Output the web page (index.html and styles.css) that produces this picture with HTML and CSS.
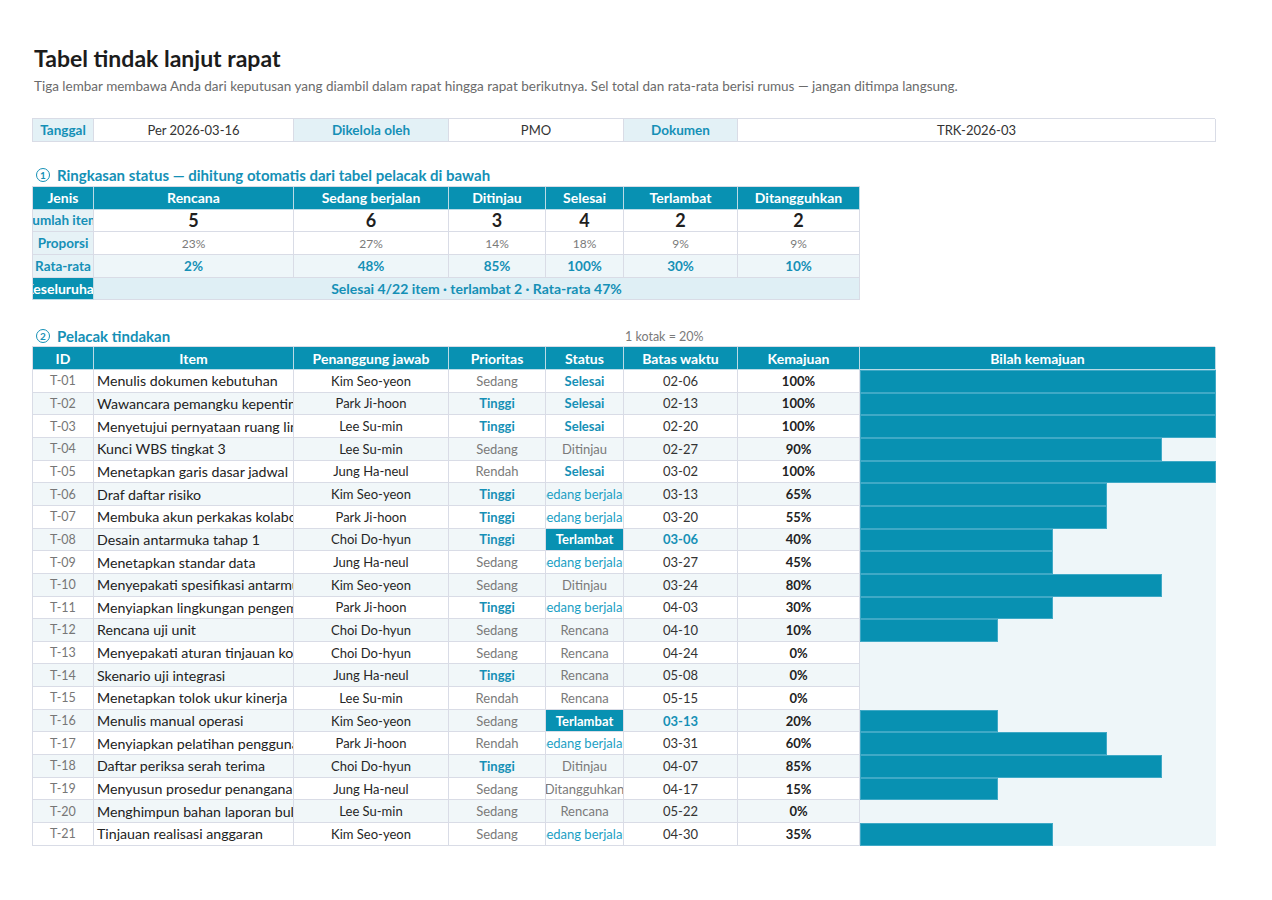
FILE: index.html
```html
<!DOCTYPE html>
<html lang="id">
<head>
  <meta charset="UTF-8">
  <meta name="viewport" content="width=device-width, initial-scale=1.0">
  <title>Tabel tindak lanjut rapat</title>
  <link rel="stylesheet" href="styles.css">
</head>
<body>

  <!-- Judul -->
  <h1 class="title">Tabel tindak lanjut rapat</h1>
  <p class="subtitle">Tiga lembar membawa Anda dari keputusan yang diambil dalam rapat hingga rapat berikutnya. Sel total dan rata-rata berisi rumus — jangan ditimpa langsung.</p>

  <!-- Info dokumen -->
  <div class="sheet info">
    <div class="c label">Tanggal</div>
    <div class="c value">Per 2026-03-16</div>
    <div class="c label">Dikelola oleh</div>
    <div class="c value span2">PMO</div>
    <div class="c label">Dokumen</div>
    <div class="c value span2">TRK-2026-03</div>
  </div>

  <!-- Ringkasan -->
  <div class="section-title"><span class="num">1</span>Ringkasan status — dihitung otomatis dari tabel pelacak di bawah</div>
  <div class="sheet summary">
    <div class="c head">Jenis</div>
    <div class="c head">Rencana</div>
    <div class="c head">Sedang berjalan</div>
    <div class="c head">Ditinjau</div>
    <div class="c head">Selesai</div>
    <div class="c head">Terlambat</div>
    <div class="c head">Ditangguhkan</div>

    <div class="c rowlabel">Jumlah item</div>
    <div class="c count">5</div>
    <div class="c count">6</div>
    <div class="c count">3</div>
    <div class="c count">4</div>
    <div class="c count">2</div>
    <div class="c count">2</div>

    <div class="c rowlabel">Proporsi</div>
    <div class="c ratio">23%</div>
    <div class="c ratio">27%</div>
    <div class="c ratio">14%</div>
    <div class="c ratio">18%</div>
    <div class="c ratio">9%</div>
    <div class="c ratio">9%</div>

    <div class="c rowlabel">Rata-rata</div>
    <div class="c avg">2%</div>
    <div class="c avg">48%</div>
    <div class="c avg">85%</div>
    <div class="c avg">100%</div>
    <div class="c avg">30%</div>
    <div class="c avg">10%</div>

    <div class="c head">Keseluruhan</div>
    <div class="c total">Selesai 4/22 item · terlambat 2 · Rata-rata 47%</div>
  </div>

  <!-- Pelacak -->
  <div class="tracker-title">
    <div class="section-title"><span class="num">2</span>Pelacak tindakan</div>
    <div class="note">1 kotak = 20%</div>
  </div>
  <div class="sheet tracker" id="tracker">
    <div class="c head">ID</div>
    <div class="c head">Item</div>
    <div class="c head">Penanggung jawab</div>
    <div class="c head">Prioritas</div>
    <div class="c head">Status</div>
    <div class="c head">Batas waktu</div>
    <div class="c head">Kemajuan</div>
    <div class="c head">Bilah kemajuan</div>
  </div>

  <script>
    // Data pelacak: id, item, pj, prioritas, status, batas, kemajuan, kotak
    const rows = [
      ['T-01', 'Menulis dokumen kebutuhan', 'Kim Seo-yeon', 'Sedang', 'Selesai', '02-06', 100, 5],
      ['T-02', 'Wawancara pemangku kepentingan', 'Park Ji-hoon', 'Tinggi', 'Selesai', '02-13', 100, 5],
      ['T-03', 'Menyetujui pernyataan ruang lingkup', 'Lee Su-min', 'Tinggi', 'Selesai', '02-20', 100, 5],
      ['T-04', 'Kunci WBS tingkat 3', 'Lee Su-min', 'Sedang', 'Ditinjau', '02-27', 90, 4],
      ['T-05', 'Menetapkan garis dasar jadwal', 'Jung Ha-neul', 'Rendah', 'Selesai', '03-02', 100, 5],
      ['T-06', 'Draf daftar risiko', 'Kim Seo-yeon', 'Tinggi', 'Sedang berjalan', '03-13', 65, 3],
      ['T-07', 'Membuka akun perkakas kolaborasi', 'Park Ji-hoon', 'Tinggi', 'Sedang berjalan', '03-20', 55, 3],
      ['T-08', 'Desain antarmuka tahap 1', 'Choi Do-hyun', 'Tinggi', 'Terlambat', '03-06', 40, 2],
      ['T-09', 'Menetapkan standar data', 'Jung Ha-neul', 'Sedang', 'Sedang berjalan', '03-27', 45, 2],
      ['T-10', 'Menyepakati spesifikasi antarmuka', 'Kim Seo-yeon', 'Sedang', 'Ditinjau', '03-24', 80, 4],
      ['T-11', 'Menyiapkan lingkungan pengembangan', 'Park Ji-hoon', 'Tinggi', 'Sedang berjalan', '04-03', 30, 2],
      ['T-12', 'Rencana uji unit', 'Choi Do-hyun', 'Sedang', 'Rencana', '04-10', 10, 1],
      ['T-13', 'Menyepakati aturan tinjauan kode', 'Choi Do-hyun', 'Sedang', 'Rencana', '04-24', 0, 0],
      ['T-14', 'Skenario uji integrasi', 'Jung Ha-neul', 'Tinggi', 'Rencana', '05-08', 0, 0],
      ['T-15', 'Menetapkan tolok ukur kinerja', 'Lee Su-min', 'Rendah', 'Rencana', '05-15', 0, 0],
      ['T-16', 'Menulis manual operasi', 'Kim Seo-yeon', 'Sedang', 'Terlambat', '03-13', 20, 1],
      ['T-17', 'Menyiapkan pelatihan pengguna', 'Park Ji-hoon', 'Rendah', 'Sedang berjalan', '03-31', 60, 3],
      ['T-18', 'Daftar periksa serah terima', 'Choi Do-hyun', 'Tinggi', 'Ditinjau', '04-07', 85, 4],
      ['T-19', 'Menyusun prosedur penanganan insiden', 'Jung Ha-neul', 'Sedang', 'Ditangguhkan', '04-17', 15, 1],
      ['T-20', 'Menghimpun bahan laporan bulanan', 'Lee Su-min', 'Sedang', 'Rencana', '05-22', 0, 0],
      ['T-21', 'Tinjauan realisasi anggaran', 'Kim Seo-yeon', 'Sedang', 'Sedang berjalan', '04-30', 35, 2]
    ];

    // Lebar kotak pada kolom bilah (px)
    const boxEnd = [0, 138, 193, 247, 302, 356];

    const statusClass = {
      'Selesai': 'st-done',
      'Sedang berjalan': 'st-run',
      'Terlambat': 'st-late',
      'Ditinjau': 'st-muted',
      'Rencana': 'st-muted',
      'Ditangguhkan': 'st-muted'
    };

    const tracker = document.getElementById('tracker');
    let html = '';
    rows.forEach((r, i) => {
      const alt = i % 2 === 1 ? ' alt' : '';
      const late = r[4] === 'Terlambat';
      html += `
        <div class="c id${alt}">${r[0]}</div>
        <div class="c item${alt}">${r[1]}</div>
        <div class="c owner${alt}">${r[2]}</div>
        <div class="c ${r[3] === 'Tinggi' ? 'pr-high' : 'pr-normal'}${alt}">${r[3]}</div>
        <div class="c ${statusClass[r[4]]}${alt}">${r[4]}</div>
        <div class="c due${late ? ' due-late' : ''}${alt}">${r[5]}</div>
        <div class="c pct${alt}">${r[6]}%</div>
        <div class="c bar-cell"><div class="bar" style="width: ${boxEnd[r[7]]}px"></div></div>
      `;
    });
    tracker.insertAdjacentHTML('beforeend', html);
  </script>

</body>
</html>
```

FILE: styles.css
```css
body {
  margin: 0;
  padding: 44px 32px 40px 32px;
  background-color: #ffffff;
  font-family: 'Lato', 'Carlito', 'Liberation Sans', sans-serif;
  color: #222;
}

.title {
  margin: 0 0 0 2px;
  font-size: 23px;
  line-height: 28px;
  font-weight: 700;
  color: #1c1c1c;
}

.subtitle {
  margin: 5px 0 0 2px;
  font-size: 13.5px;
  line-height: 18px;
  color: #6b6b6b;
}

/* Grid lembar kerja */
.sheet {
  display: grid;
  grid-template-columns: 61px 200px 155px 97px 78px 114px 122px 356px;
  border-left: 1px solid #d9dce6;
  border-top: 1px solid #d9dce6;
  width: 1183px;
  box-sizing: border-box;
}

.c {
  box-sizing: border-box;
  display: flex;
  align-items: center;
  justify-content: center;
  overflow: hidden;
  white-space: nowrap;
  border-right: 1px solid #d9dce6;
  border-bottom: 1px solid #d9dce6;
  font-size: 13px;
  min-width: 0;
}

.span2 {
  grid-column: span 2;
}

/* Info */
.info {
  margin-top: 23px;
  grid-auto-rows: 23px;
}

.info .label {
  background-color: #e3f1f6;
  color: #1590b6;
  font-weight: 700;
  font-size: 13.5px;
}

.info .value {
  background-color: #ffffff;
  color: #333;
}

/* Judul bagian */
.section-title {
  display: flex;
  align-items: center;
  font-size: 15px;
  line-height: 18px;
  font-weight: 700;
  color: #1590b6;
  padding-left: 4px;
  white-space: nowrap;
}

.num {
  display: inline-flex;
  align-items: center;
  justify-content: center;
  width: 12px;
  height: 12px;
  border: 1.5px solid #1590b6;
  border-radius: 50%;
  font-size: 10px;
  line-height: 1;
  margin-right: 7px;
}

body > .section-title {
  margin-top: 24px;
  margin-bottom: 2px;
}

/* Ringkasan */
.summary {
  grid-template-columns: 61px 200px 155px 97px 78px 114px 122px;
  grid-auto-rows: 22.67px;
  width: 828px;
}

.head {
  background-color: #0891b2;
  color: #ffffff;
  font-weight: 700;
  font-size: 14px;
  border-right-color: #bcdbe6;
  border-bottom-color: #bcdbe6;
}

.rowlabel {
  background-color: #e6f2f6;
  color: #1590b6;
  font-weight: 700;
  font-size: 13.5px;
}

.count {
  font-size: 18px;
  font-weight: 700;
  color: #1f1f1f;
}

.ratio {
  font-size: 12px;
  color: #7a7a7a;
}

.avg {
  background-color: #eef6f9;
  color: #1590b6;
  font-weight: 700;
  font-size: 13.5px;
}

.total {
  grid-column: span 6;
  background-color: #dfeff5;
  color: #1590b6;
  font-weight: 700;
  font-size: 14px;
}

/* Pelacak */
.tracker-title {
  display: grid;
  grid-template-columns: 591px 300px;
  margin-top: 27px;
  margin-bottom: 1px;
  align-items: center;
}

.note {
  font-size: 12.5px;
  color: #7a7a7a;
  padding-left: 2px;
}

.tracker {
  grid-auto-rows: 22.67px;
}

.tracker .c {
  background-color: #ffffff;
}

.tracker .head {
  background-color: #0891b2;
}

.tracker .alt {
  background-color: #f1f7f9;
}

.id {
  font-size: 12.5px;
  color: #767676;
}

.item {
  justify-content: flex-start;
  padding-left: 3px;
  font-size: 14.2px;
  color: #222;
}

.owner {
  color: #262626;
}

.pr-high {
  color: #1590b6;
  font-weight: 700;
}

.pr-normal {
  color: #7a7a7a;
}

.st-done {
  color: #1590b6;
  font-weight: 700;
}

.st-run {
  color: #1ba0c4;
}

.st-muted {
  color: #7a7a7a;
}

.tracker .st-late {
  background-color: #0891b2;
  color: #ffffff;
  font-weight: 700;
}

.due {
  color: #333;
}

.due-late {
  color: #1590b6;
  font-weight: 700;
}

.pct {
  font-size: 13px;
  font-weight: 700;
  color: #222;
}

.tracker .bar-cell {
  justify-content: flex-start;
  align-items: stretch;
  background-color: #eef6f9;
  border-bottom: none;
  border-right: none;
}

.bar {
  background-color: #0891b2;
  box-shadow: inset 0 0 0 1px #3fa9c6;
}
```
